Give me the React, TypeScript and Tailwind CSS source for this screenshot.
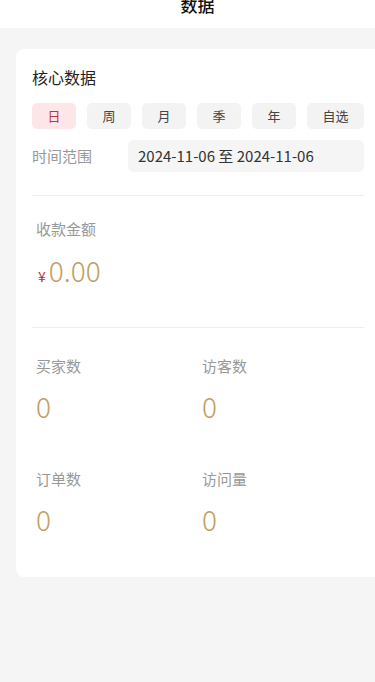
import React from "react";

const periods = ["日", "周", "月", "季", "年", "自选"];

export default function App() {
  return (
    <div
      className="w-[375px] h-[682px] overflow-hidden bg-[#f5f5f5]"
      style={{ fontFamily: '"Noto Sans CJK SC", "Noto Sans", sans-serif' }}
    >
      <div className="h-[28px] bg-white flex justify-center pl-[20px] overflow-hidden">
        <div className="-mt-[6px] text-[17px] leading-[22px] font-medium text-[#111]">数据</div>
      </div>
      <div className="mt-[21px] ml-[16px] w-[364px] h-[528px] bg-white rounded-l-[8px] pl-[16px] pr-[16px]">
        <div className="pt-[17px]">
          <div className="text-[16px] leading-[22px] text-[#222]">核心数据</div>
          <div className="mt-[15px] flex gap-[11px]">
            {periods.map((p, i) => (
              <div
                key={p}
                className={
                  "h-[26px] rounded-[5px] flex items-center justify-center text-[13px] " +
                  (i === periods.length - 1 ? "w-[57px] " : "w-[44px] ") +
                  (i === 0 ? "bg-[#fde6e8] text-[#c0363c]" : "bg-[#f3f3f3] text-[#444]")
                }
              >
                {p}
              </div>
            ))}
          </div>
          <div className="mt-[11px] flex items-center">
            <div className="w-[96px] text-[15px] text-[#999]">时间范围</div>
            <div className="flex-1 h-[32px] rounded-[5px] bg-[#f5f5f5] flex items-center pl-[10px] text-[15px] text-[#333]">
              2024-11-06 至 2024-11-06
            </div>
          </div>
          <div className="mt-[23px] h-px bg-[#efefef]" />
          <div className="pl-[4px] pt-[22px]">
            <div className="text-[15px] leading-[21px] text-[#999]">收款金额</div>
            <div className="mt-[13px] flex items-baseline h-[36px] pl-[2px]">
              <span className="text-[14px] text-[#b3303c] mr-[3px]">¥</span>
              <span className="text-[28px] leading-[36px] font-light text-[#bfa062]">0.00</span>
            </div>
          </div>
          <div className="mt-[39px] h-px bg-[#efefef]" />
          <div className="pl-[4px] pt-[27px] grid grid-cols-[166px_1fr] gap-y-[45px]">
            {[
              ["买家数", "0"],
              ["访客数", "0"],
              ["订单数", "0"],
              ["访问量", "0"],
            ].map(([label, value]) => (
              <div key={label}>
                <div className="text-[15px] leading-[21px] text-[#999]">{label}</div>
                <div className="mt-[13px] text-[28px] leading-[34px] font-light text-[#bfa062]">{value}</div>
              </div>
            ))}
          </div>
        </div>
      </div>
    </div>
  );
}
